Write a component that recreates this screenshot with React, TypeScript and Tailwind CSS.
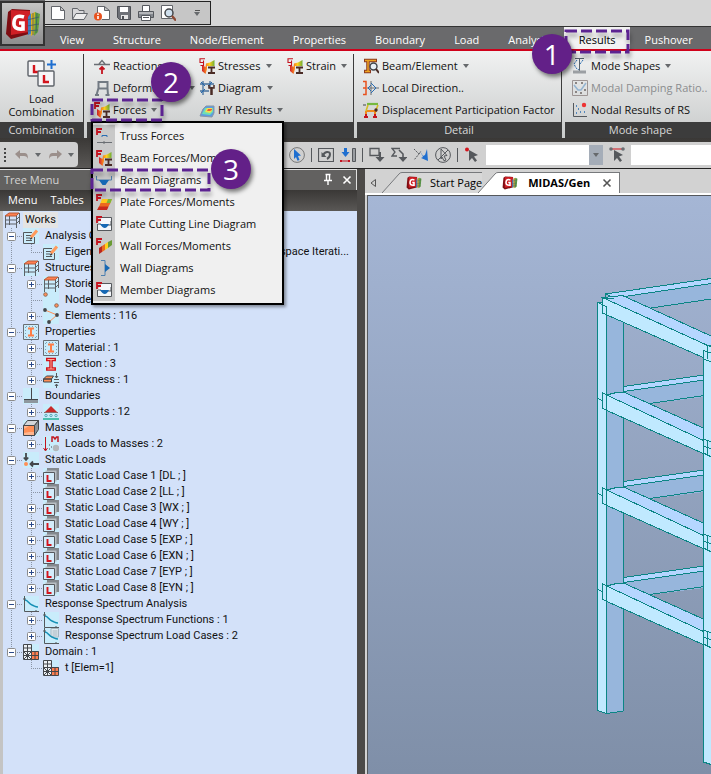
import React from 'react';

type IconProps = { name: string; className?: string };

const LoadBox = ({ x, y }: { x: number; y: number }) => (
  <g>
    <rect x={x} y={y} width="16" height="15" rx="1" fill="#f5f5f7" stroke="#5c6168" strokeWidth="1.4" />
    <path d={`M${x + 6} ${y + 4}v7h5`} fill="none" stroke="#d3141c" strokeWidth="2.4" />
  </g>
);

const Rainbow = () => (
  <g>
    <defs>
      <linearGradient id="rainbow" x1="0" x2="1" y1="0" y2="0">
        <stop offset="0" stopColor="#cf1f2b" />
        <stop offset="0.3" stopColor="#f47a20" />
        <stop offset="0.6" stopColor="#ffd01c" />
        <stop offset="1" stopColor="#6fae35" />
      </linearGradient>
    </defs>
    <path d="M3 7l3.500 2L7 5.500l4-1L15.500 2v6H8v3l-1.500 5L3 13z" fill="url(#rainbow)" />
  </g>
);

const RedF = () => <path d="M1 7V1h5M1 4h4" fill="none" stroke="#c4131f" strokeWidth="1.8" />;

const Beam = () => <path d="M9 9.500h7M9 15h7M12.500 9v6" stroke="#4a2b25" strokeWidth="1.800" fill="none" />;

const StressIcon = () => (
  <g>
    <Rainbow />
    <Beam />
    <path d="M6 .8H1v3.700h3.500V2.500M4.500 4.500v3H1.500" fill="none" stroke="#c4131f" strokeWidth="1.1" />
  </g>
);

const Story = () => (
  <g fill="none" stroke="#5d6166">
    <path d="M1 4l4-3h10l-3 3z" fill="#ff7f50" stroke="#b85a38" />
    <path d="M1.500 4v12M12.500 4v12M5.500 4v9M15.500 1v11M1 8h11l3-3M1 12h11l3-3" />
  </g>
);

const CutLine = () => (
  <g>
    <path d="M6 1.500h9.500v13h-14V8" fill="#f3f6fa" stroke="#55585c" />
    <path d="M2 8h3q3 5 6 1h4v-4" stroke="#55585c" fill="none" />
    <path d="M4 8h9q-4 8-9 0z" fill="#1668b4" />
    <RedF />
  </g>
);

const Curve = () => (
  <g fill="none">
    <path d="M1.500 0v15.500H16M0 3h3M13 14v2" stroke="#55585c" />
    <path d="M2 4c3 0 4 4 7 5s3 2 6 2" stroke="#1590b5" strokeWidth="1.5" />
  </g>
);

const PointerShape = ({ fill = '#55585c' }: { fill?: string }) => (
  <path d="M5 3l9 5-4 1.500 3 4-2 1.500-3-4-3 3z" fill={fill} />
);

const drawings: Record<string, React.ReactNode> = {
  newDoc: <path d="M1.500 1.500h9l4 4v9h-13zM10.500 1.500v4h4" fill="#fff" stroke="#63666b" />,
  open: (
    <g stroke="#63666b">
      <path d="M.5 14.500v-11h5l1.500 2h5v3" fill="#d8d8da" />
      <path d="M.5 14.500l3.500-6h11.500l-3.500 6z" fill="#eee" />
    </g>
  ),
  docInfo: (
    <g>
      <path d="M3.500 8V1.500h7l5 4v9H8M10.500 1.500v4h5" fill="#fff" stroke="#63666b" />
      <circle cx="4" cy="11.500" r="4" fill="#e8521e" />
      <path d="M4 8.500v1.500M4 11v3" stroke="#fff" strokeWidth="1.600" />
    </g>
  ),
  save: (
    <g>
      <path d="M1.500 1.500h13v13h-11l-2-2z" fill="#6e7177" stroke="#4d5055" />
      <path d="M4 2h8v5H4z" fill="#fff" />
      <path d="M5 10h7v4H5z" fill="#e6e6e6" />
      <path d="M6 11h2v3H6z" fill="#4d5055" />
    </g>
  ),
  print: (
    <g stroke="#55585d">
      <path d="M4.500 6V.5h7V6" fill="#fff" />
      <path d="M.5 6.500h15v6H.5z" fill="#85898f" />
      <path d="M1 8h14" stroke="#e4e4e4" />
      <path d="M3.500 10.500h9v5h-9z" fill="#fff" />
      <path d="M5 12.500h6" />
    </g>
  ),
  preview: (
    <g>
      <path d="M1.500.5h11v13h-11z" fill="#fff" stroke="#63666b" />
      <circle cx="9" cy="8" r="4" fill="#cfe0ee" stroke="#44474b" strokeWidth="1.500" />
      <path d="M12 11l4 4.500" stroke="#8c4a35" strokeWidth="2.400" />
    </g>
  ),
  reaction: (
    <g>
      <path d="M0 6.500h16M5 6l3-3.500L11 6" stroke="#6a6e73" strokeWidth="1.300" fill="none" />
      <path d="M8 16v-6M5.500 11.500L8 9l2.500 2.500" stroke="#c4131f" strokeWidth="1.800" fill="none" />
    </g>
  ),
  deform: (
    <path d="M4 2h9.500M4.500 1v7L2.500 15M13.500 1v7l.5 7M4 8.500h9.500M1 15h4M11.500 15h4" stroke="#727a83" strokeWidth="2" fill="none" />
  ),
  forces: <g><Rainbow /><Beam /><RedF /></g>,
  stresses: <StressIcon />,
  diagram: (
    <g fill="none">
      <path d="M1 4h14M1 11h9M4 1v14M11 1v6" stroke="#46709c" strokeWidth="1.300" />
      <path d="M2 2l4 4M9 6l4-4M2 13l4-4" stroke="#2167b0" />
      <path d="M12.500 7v8" stroke="#4a2b25" strokeWidth="2.500" />
      <path d="M10 5v3h5V5" stroke="#4a2b25" strokeWidth="1.500" />
    </g>
  ),
  hy: (
    <g>
      <path d="M1 14L4 7l3-3h8v7l-2 4z" fill="#5b9de3" stroke="#8995a3" />
      <path d="M3 12l3-6h8v4l-3 3z" fill="#6fe0b5" />
      <path d="M6 10l2-4h5v3l-2 2z" fill="#f2e04f" />
      <path d="M8 9l1-2h4v1l-2 1z" fill="#ec5b36" />
    </g>
  ),
  beamElement: (
    <g fill="none">
      <path d="M1 2.500h13M1 13.500h7M5 3v10" stroke="#8b3a20" strokeWidth="3.500" />
      <path d="M2 2.500h11M2 13.500h5M5 3v10" stroke="#eda321" strokeWidth="1.500" />
      <circle cx="10.500" cy="8.500" r="3.500" fill="#e6eef5" stroke="#40444a" strokeWidth="1.400" />
      <path d="M13 11l3 4" stroke="#4a2b25" strokeWidth="2" />
    </g>
  ),
  localDir: (
    <g fill="none">
      <path d="M0 1.500h3v13H0M0 8h3" stroke="#e8521e" strokeWidth="1.500" />
      <path d="M4 8h12M8 1v14" stroke="#6a6e73" />
      <path d="M8 3l5 5-5 5M5 8l3-3M5 8l3 3" stroke="#2a6db3" />
    </g>
  ),
  displacement: (
    <g fill="none">
      <path d="M4 2h11" stroke="#76b83f" strokeWidth="2.200" />
      <path d="M3 9h11M3 9v3M12 9v3" stroke="#ef8a1c" strokeWidth="2" />
      <path d="M3 12v3M12 12v3M1 15h4M10 15h4" stroke="#c4131f" strokeWidth="2" />
      <path d="M5 3L3 9M15 3l-2 5" stroke="#d7bc26" strokeWidth="1.600" />
      <path d="M0 3h3" stroke="#44474b" />
      <circle cx="13" cy="8" r="1.700" fill="#4a2b25" />
    </g>
  ),
  modeShapes: (
    <g fill="none">
      <path d="M3 .5h9M7.500 0v13" stroke="#55606a" />
      <path d="M5 2L2 6l2 4 3 2M11 2L8 6" stroke="#2a6db3" strokeDasharray="2 1" />
      <path d="M1 14h13" stroke="#9b9fa3" strokeWidth="3" />
    </g>
  ),
  damping: (
    <g fill="none">
      <path d="M.5.5h15v15H.5z" stroke="#9d9594" />
      <path d="M2 5l4 5h3l5-7" stroke="#94b4d1" strokeWidth="1.500" />
      <path d="M3 3h2M9 3h2M3 12h2M8 13h2M12 10h2" stroke="#8a8583" strokeWidth="2" />
    </g>
  ),
  nodal: (
    <g fill="none">
      <path d="M1.500 1v13.500H15" stroke="#55585c" />
      <circle cx="12" cy="3" r="2.200" fill="#e33" />
      <path d="M4 4h1M6 7h1M8 10h1M12 10h1M4 11h1" stroke="#2a6db3" strokeWidth="1.400" />
    </g>
  ),
  truss: (
    <g>
      <RedF />
      <path d="M6 9V7.500h5V9" stroke="#2a6db3" fill="none" />
      <path d="M1 14.500h15M8 13v3" stroke="#6a6e73" fill="none" />
    </g>
  ),
  beamDiagram: (
    <g>
      <path d="M.5 4v4h15V4" stroke="#4c7fae" fill="none" />
      <path d="M3 8h10l-3.500 5h-3z" fill="#1668b4" />
    </g>
  ),
  plate: (
    <g>
      <path d="M6 5h10l-1.500 4H4.500z" fill="#ffc71c" />
      <path d="M12 5h4l-1.500 4h-4z" fill="#7cb53a" />
      <path d="M4.500 9h10L11 15H2z" fill="#ec6a20" />
      <path d="M3 12.500h9.500L11 16H1z" fill="#c92a1e" />
      <RedF />
    </g>
  ),
  cutLine: <CutLine />,
  wall: (
    <g>
      <path d="M3 10l3-2v6l-3 2z" fill="#b9261f" />
      <path d="M6 8l3-2v6l-3 2z" fill="#ec6a20" />
      <path d="M9 6l3-2v6l-3 2z" fill="#ffd01c" />
      <path d="M12 4l4-2v5l-4 3z" fill="#6a9b35" />
      <RedF />
    </g>
  ),
  wallDiagram: (
    <g>
      <path d="M5 .5h4v15H5" stroke="#4c7fae" fill="none" />
      <path d="M9 4l5 4-5 4z" fill="#1668b4" />
    </g>
  ),
  story: <Story />,
  edit: (
    <g fill="none">
      <path d="M9 4.500H.5v11h11V9M3 7.500h5M3 10h4M3 12.500h6" stroke="#55585c" />
      <path d="M8 9.500l6-7" stroke="#ff9a5c" strokeWidth="3" />
      <path d="M7 11l2-1" stroke="#444" strokeWidth="1.500" />
    </g>
  ),
  nodes: (
    <g fill="#ff8f56" stroke="#8f6a5c">
      <circle cx="2.500" cy="2.500" r="1.800" />
      <circle cx="13.500" cy="13.500" r="1.800" />
    </g>
  ),
  elements: (
    <g>
      <path d="M2 2l12 5-8 7" stroke="#ff8f56" fill="none" />
      <g fill="#44474b"><circle cx="2" cy="2" r="1.900" /><circle cx="14" cy="7" r="1.900" /><circle cx="6" cy="14" r="1.900" /></g>
    </g>
  ),
  material: (
    <g fill="none">
      <path d="M.5.5h15v15H.5z" stroke="#6a6e73" />
      <path d="M3 2.500h11M3 13.500h11M2.500 3v11M13.500 3v11" stroke="#7ea1b5" strokeDasharray="1 2" />
      <path d="M5 4.500h6M5 11.500h6M8 5v6" stroke="#ff7e46" strokeWidth="2" />
    </g>
  ),
  section: (
    <g fill="none">
      <path d="M3 3.500h10M3 13h10M8 4v9" stroke="#d3141c" strokeWidth="3.500" />
      <path d="M4.500 3.500h7M4.500 13h7M8 4v9" stroke="#ffb09a" />
    </g>
  ),
  thickness: (
    <g>
      <path d="M.5 7l3-3h7l-2 3zM.5 7h8v3h-8z" fill="#ff8f56" stroke="#44474b" />
      <path d="M11 7.500h5M11 10.500h5M13.500 1v5M13.500 12v4M12 4l1.500 2L15 4M12 14l1.500-2 1.500 2" stroke="#55585c" fill="none" />
    </g>
  ),
  boundary: (
    <g>
      <path d="M8.500 0v11M1 11.500h14" stroke="#44474b" />
      <path d="M1 12h14v3H1z" fill="#8e979e" />
    </g>
  ),
  support: (
    <g>
      <path d="M2 8l6-6 6 6z" fill="#c92a2a" />
      <path d="M1 8.500h14" stroke="#8d6a6a" />
      <g fill="none" stroke="#5aa9b8"><circle cx="3" cy="11.500" r="1.200" /><circle cx="8" cy="11.500" r="1.200" /><circle cx="13" cy="11.500" r="1.200" /></g>
      <path d="M0 15h16" stroke="#4bbfae" strokeWidth="2" />
    </g>
  ),
  mass: (
    <g stroke="#44474b">
      <path d="M.5 5.500l4-5h11l-4 5z" fill="#d3d6da" />
      <path d="M.5 5.500h11v10H.5z" fill="#ffb68e" />
      <path d="M1 9l5-3h5v6H6l-5 1z" fill="#ff8f56" stroke="none" />
      <path d="M11.500 5.500l4-5v9l-4 6z" fill="#8f9398" />
    </g>
  ),
  loadMass: (
    <g fill="none">
      <path d="M2.500 1v13M.5 12l2 3 2-3" stroke="#c4131f" />
      <path d="M9 6V1h1.500l1.500 2 1.500-2H15v5" stroke="#c4131f" strokeWidth="1.500" />
      <circle cx="13" cy="12" r="3.200" fill="#b3b6ba" />
      <path d="M6 9h1M8 11h1M6 13h1" stroke="#44474b" />
    </g>
  ),
  staticLoad: (
    <g>
      <path d="M3 1v7M.8 5.500L3 8l2.200-2.500M16 12H8M10 9.500L7.500 12l2.500 2.500" stroke="#44474b" strokeWidth="1.800" fill="none" />
      <circle cx="3" cy="12" r="2" fill="#ff8f56" />
    </g>
  ),
  loadCase: (
    <g>
      <path d="M4 0h12v12H4z" fill="#84898e" />
      <path d="M2.500 2.500h11v11h-11z" fill="#b9bfc4" />
      <path d="M.5 4.500h11v11H.5z" fill="#d3ecfb" stroke="#55585c" />
      <path d="M4.500 7v6h4" stroke="#d3141c" strokeWidth="1.900" fill="none" />
    </g>
  ),
  curve: <Curve />,
  curveCases: (
    <g>
      <path d="M8 .5h7.500V9H8zM9.500 3h5M9.500 5h5M9.500 7h5" stroke="#a6b5bf" fill="#dfeaf1" />
      <Curve />
    </g>
  ),
  domain: (
    <g stroke="#44474b">
      <path d="M.5.5h8v15h-8z" fill="#eef2f5" />
      <path d="M8.500 7.500h7v8h-7z" fill="#ff7f50" />
      <path d="M4.500 1v14M.5 4h8M.5 7.500h15M.5 11.500h15M12 8v8M1 8l7 7M8 8l-7 7" fill="none" />
    </g>
  ),
  pickCircle: (
    <g>
      <circle cx="8" cy="8" r="7.400" fill="none" stroke="#777" />
      <path d="M5 2l7 6.500-3 .5 1.500 4-2 .8L7 10l-2 2z" fill="#1f6fd0" />
    </g>
  ),
  rotateBox: (
    <g fill="none" stroke="#55585c">
      <path d="M.5 1.500h15v13H.5z" strokeWidth="1.200" />
      <path d="M5 9c1-5 7-5 7-2 0 2-1 4-3 5" strokeWidth="2" />
      <path d="M3.500 5v5h5z" fill="#55585c" stroke="none" />
    </g>
  ),
  dropLine: (
    <g fill="none">
      <path d="M5.500 1v6" stroke="#1f6fd0" strokeWidth="3" />
      <path d="M1.500 5h8l-4 5z" fill="#1f6fd0" />
      <path d="M0 14h10" stroke="#c4131f" />
      <path d="M0 13h2v2H0zM8 13h2v2H8z" fill="#c4131f" />
      <path d="M12.500 1.500h3v13h-3z" fill="#9a9da1" stroke="#55585c" />
    </g>
  ),
  selWindow: (
    <g fill="none">
      <path d="M1 1.500h9v7H1z" stroke="#55585c" strokeWidth="1.300" />
      <path d="M11 5v6" stroke="#55585c" strokeWidth="2" />
      <path d="M6.500 10h9L11 15z" fill="#55585c" />
    </g>
  ),
  selPoly: (
    <g fill="none">
      <path d="M9 1.500H1L4 5 1 9h5" stroke="#55585c" strokeWidth="1.300" />
      <path d="M8 3l4 4v4" stroke="#55585c" strokeWidth="1.600" />
      <path d="M7.500 10h9L12 15z" fill="#55585c" />
    </g>
  ),
  selCross: (
    <g fill="none">
      <path d="M1 2l5 5-5 6M6 7l2-3" stroke="#55585c" strokeDasharray="2 1" />
      <path d="M7 4l3 5 2-1 2-6 1 12-7-3 2-1z" fill="#1f6fd0" />
    </g>
  ),
  noPick: (
    <g fill="none" stroke="#55585c">
      <circle cx="8" cy="8" r="7.400" />
      <path d="M3 13L13 3M6 2l6 6.500-3 .5 2 4-2 .8L7 10l-1 2z" />
    </g>
  ),
  pickNode: (
    <g>
      <circle cx="3" cy="2.500" r="2" fill="#d3141c" />
      <PointerShape />
    </g>
  ),
  pickElem: (
    <g>
      <path d="M2 2h12" stroke="#d3141c" />
      <circle cx="2" cy="2" r="1.800" fill="#6a6e73" />
      <circle cx="14" cy="2" r="1.800" fill="#6a6e73" />
      <PointerShape />
    </g>
  ),
  undo: <path d="M1 7l5-4v3h5q3 0 3 6-1-3-4-3H6v3z" fill="#9b8f8b" />,
  redo: <path d="M15 7l-5-4v3H5q-3 0-3 6 1-3 4-3h4v3z" fill="#9b8f8b" />,
  pin: <path d="M5.500 2.500h5M6.500 2v6M9.500 2v6M4 8.500h8M8 9v4" stroke="#fff" strokeWidth="1.400" fill="none" />,
  close: <path d="M4.500 4.500l7 7M11.500 4.500l-7 7" stroke="currentColor" strokeWidth="1.600" />,
};

const Icon = ({ name, className = 'size-4' }: IconProps) => (
  <svg viewBox="0 0 16 16" className={`shrink-0 ${className}`} aria-hidden="true">
    {drawings[name]}
  </svg>
);

const Logo = ({ className }: { className: string }) => (
  <svg viewBox="0 0 36 32" className={`shrink-0 ${className}`} aria-hidden="true">
    <path d="M3 4l4-3 18 1-1 24-18 5-5-5z" fill="#7d0d12" />
    <path d="M6 2l19 1-1 21-18 3z" fill="#cf1f25" />
    <path d="M19 9q-9-3-10 5t9 7v-6h-4" fill="none" stroke="#fff" strokeWidth="3.600" />
    <path d="M23 9l3-4 1 20-4 2z" fill="#3f7fc4" />
    <path d="M26 6l4-2v21l-4 3z" fill="#e2b31f" />
    <path d="M30 4l5 2-2 18-4 4z" fill="#62a23c" />
    <path d="M22 12l12-3M22 18l12-2M22 23l11-1M28 5v22M32 5l-1 20" stroke="#3c5a6b" strokeWidth="0.800" />
  </svg>
);

const Arrow = ({ className = 'text-[#66696c]' }: { className?: string }) => (
  <svg viewBox="0 0 6 4" className={`h-1 w-[6px] shrink-0 ${className}`} aria-hidden="true">
    <path d="M0 0h6L3 4z" fill="currentColor" />
  </svg>
);

const Badge = ({ n, className }: { n: number; className: string }) => (
  <span
    className={`absolute z-40 flex size-10 items-center justify-center rounded-full bg-[#632088] text-[28px] leading-none text-white shadow-[2px_3px_4px_rgba(0,0,0,0.5)] ${className}`}
  >
    {n}
  </span>
);

const Marker = ({ className }: { className: string }) => (
  <svg className={`pointer-events-none absolute z-30 overflow-visible drop-shadow-[1px_4px_2px_rgba(0,0,0,0.35)] ${className}`}>
    <rect width="100%" height="100%" fill="none" stroke="#5c2391" strokeWidth="3" strokeDasharray="11 4" />
  </svg>
);

const Command = ({ icon, label, arrow, disabled }: { icon: string; label: string; arrow?: boolean; disabled?: boolean }) => (
  <button
    disabled={disabled}
    className="flex h-[22px] items-center gap-[3px] whitespace-nowrap text-[#111] disabled:text-[#8b8d8f]"
  >
    <Icon name={icon} />
    <span>{label}</span>
    {arrow && <span className="pl-[2px]"><Arrow /></span>}
  </button>
);

const Panel = ({ title, className = '', children }: { title: string; className?: string; children: React.ReactNode }) => (
  <section className={`flex shrink-0 flex-col border-r border-[#3c3c3c] ${className}`}>
    <div className="min-h-[68px] flex-1 pt-px">{children}</div>
    <h2 className="h-4 bg-[#3c3c3c] text-center leading-4 text-[#d8d8d8]">{title}</h2>
  </section>
);

const forceItems = [
  { icon: 'truss', label: 'Truss Forces' },
  { icon: 'forces', label: 'Beam Forces/Moments' },
  { icon: 'beamDiagram', label: 'Beam Diagrams' },
  { icon: 'plate', label: 'Plate Forces/Moments' },
  { icon: 'cutLine', label: 'Plate Cutting Line Diagram' },
  { icon: 'wall', label: 'Wall Forces/Moments' },
  { icon: 'wallDiagram', label: 'Wall Diagrams' },
  { icon: 'cutLine', label: 'Member Diagrams' },
];

const ForcesMenu = () => (
  <ul className="absolute top-[22px] -left-[3px] z-20 w-[193px] border-2 border-black bg-[#f0f0f0] py-[2px] shadow-[2px_2px_3px_rgba(0,0,0,0.4)]">
    {forceItems.map((item) => (
      <li key={item.label} className="relative">
        <button className="flex h-[22px] w-full items-center whitespace-nowrap text-[#111]">
          <span className="flex h-[22px] w-[22px] items-center justify-center bg-[#c9c9c9]">
            <Icon name={item.icon} />
          </span>
          <span className="pl-[5px]">{item.label}</span>
        </button>
        {item.label === 'Beam Diagrams' && (
          <>
            <Marker className="top-px -left-px h-[20px] w-[117px]" />
            <Badge n={3} className="-top-[20px] left-[118px]" />
          </>
        )}
      </li>
    ))}
  </ul>
);

const tabs = ['View', 'Structure', 'Node/Element', 'Properties', 'Boundary', 'Load', 'Analysis', 'Results', 'Pushover'];

const Header = () => (
  <header className="flex bg-[#d6d6d6]">
    <div className="w-[45px] shrink-0 bg-[#6a6a6c] pb-[3px]">
      <button aria-label="Application menu" className="mt-px flex h-[45px] w-full items-center justify-center border-2 border-[#333] bg-linear-to-b from-[#c4c4c4] to-[#8e8e8e]">
        <Logo className="h-8 w-9" />
      </button>
    </div>
    <div className="min-w-0 flex-1">
      <div className="flex h-[26px] items-start pt-px">
        <div className="flex h-6 items-center gap-[6px] border border-l-0 border-[#222] bg-[#c6c6c6] pr-[10px] pl-[5px]">
          {['newDoc', 'open', 'docInfo', 'save', 'print', 'preview'].map((name) => (
            <button key={name} aria-label={name}><Icon name={name} /></button>
          ))}
          <button aria-label="Customize" className="ml-3 flex flex-col items-center gap-px">
            <span className="h-px w-[5px] bg-[#555]" />
            <Arrow />
          </button>
        </div>
      </div>
      <nav className="flex h-[23px] border-t border-[#333] bg-[#6a6a6c] text-white">
        {tabs.map((tab) => (
          <div key={tab} className="relative shrink-0">
            <button
              className={`h-full pt-[3px] pr-[14px] pl-[15px] leading-4 ${tab === 'Results' ? 'bg-[#f2f2f2] text-black' : ''}`}
            >
              {tab}
            </button>
            {tab === 'Results' && (
              <>
                <Marker className="top-1 left-[2px] h-[21px] w-[62px]" />
                <Badge n={1} className="top-[7px] -left-[32px]" />
              </>
            )}
          </div>
        ))}
      </nav>
    </div>
  </header>
);

const Ribbon = () => (
  <div className="flex gap-[3px] border-t-2 border-[#d0021b] bg-linear-to-b from-[#f1f2f2] to-[#c9cbcb] pt-[3px]">
    <Panel title="Combination" className="w-[84px]">
      <button className="flex w-full flex-col items-center pt-[5px] leading-[13px] text-[#111]">
        <svg viewBox="0 0 30 28" className="mb-1 h-7 w-[30px]" aria-hidden="true">
          <LoadBox x={1} y={1} />
          <LoadBox x={11} y={11} />
          <path d="M24.500 0v9M20 4.500h9" stroke="#1f6fd0" strokeWidth="2" />
        </svg>
        Load<br />Combination
      </button>
    </Panel>
    <Panel title="" className="w-[267px]">
      <div className="flex pl-[7px]">
        <div className="w-[105px]">
          <Command icon="reaction" label="Reactions" arrow />
          <div className="relative">
            <Command icon="deform" label="Deformations" arrow />
            <Badge n={2} className="-top-[15px] left-[57px]" />
          </div>
          <div className="relative">
            <Command icon="forces" label="Forces" arrow />
            <Marker className="top-px -left-[2px] h-[20px] w-[70px]" />
            <ForcesMenu />
          </div>
        </div>
        <div className="w-[88px]">
          <Command icon="stresses" label="Stresses" arrow />
          <Command icon="diagram" label="Diagram" arrow />
          <Command icon="hy" label="HY Results" arrow />
        </div>
        <div>
          <Command icon="stresses" label="Strain" arrow />
        </div>
      </div>
    </Panel>
    <Panel title="Detail" className="w-[205px]">
      <div className="pl-[6px]">
        <Command icon="beamElement" label="Beam/Element" arrow />
        <Command icon="localDir" label="Local Direction.." />
        <Command icon="displacement" label="Displacement Participation Factor" />
      </div>
    </Panel>
    <Panel title="Mode shape" className="min-w-[152px] grow">
      <div className="pl-[7px]">
        <Command icon="modeShapes" label="Mode Shapes" arrow />
        <Command icon="damping" label="Modal Damping Ratio.." disabled />
        <Command icon="nodal" label="Nodal Results of RS" />
      </div>
    </Panel>
  </div>
);

const Divider = () => <span className="h-[14px] w-px shrink-0 bg-[#55585c]" />;

const Toolbar = () => (
  <div className="flex h-[31px] border-b border-[#222] bg-linear-to-b from-[#3a3836] to-[#5a5856] pt-1">
    <div className="flex h-[25px] w-[78px] shrink-0 items-center rounded-r bg-[#d0d0d0] pl-1">
      <span className="h-[14px] border-l-2 border-dotted border-[#444]" />
      <button aria-label="Undo" className="ml-2"><Icon name="undo" /></button>
      <span className="ml-[5px]"><Arrow /></span>
      <button aria-label="Redo" className="ml-[6px]"><Icon name="redo" /></button>
      <span className="ml-[5px]"><Arrow /></span>
    </div>
    <div className="w-[206px] shrink-0" />
    <div className="flex min-w-0 flex-1 items-center gap-[6px] bg-[#d0d0d0] pl-[5px]">
      <Icon name="pickCircle" />
      <Divider />
      <Icon name="rotateBox" />
      <Icon name="dropLine" />
      <Divider />
      <Icon name="selWindow" />
      <Icon name="selPoly" />
      <Icon name="selCross" />
      <Icon name="noPick" />
      <Divider />
      <Icon name="pickNode" />
      <div className="relative shrink-0">
        <select aria-label="Node selection" className="block h-5 w-[117px] appearance-none bg-white" />
        <span className="pointer-events-none absolute inset-y-0 right-0 flex w-[14px] items-center justify-center bg-[#a5adb8]">
          <Arrow />
        </span>
      </div>
      <Icon name="pickElem" />
      <input aria-label="Element selection" className="h-5 w-0 min-w-0 flex-1 bg-white" />
    </div>
  </div>
);

type TreeRow = { level: number; icon: string; label: string; toggle?: '+' | '-'; last?: boolean; detail?: string };

const treeRows: TreeRow[] = [
  { level: 1, icon: 'edit', label: 'Analysis Control Data', toggle: '-' },
  { level: 2, icon: 'edit', label: 'Eigenvalue Analysis', detail: 'space Iterati...', last: true },
  { level: 1, icon: 'story', label: 'Structures', toggle: '-' },
  { level: 2, icon: 'story', label: 'Stories : 5', toggle: '+' },
  { level: 2, icon: 'nodes', label: 'Nodes : 60' },
  { level: 2, icon: 'elements', label: 'Elements : 116', toggle: '+', last: true },
  { level: 1, icon: 'material', label: 'Properties', toggle: '-' },
  { level: 2, icon: 'material', label: 'Material : 1', toggle: '+' },
  { level: 2, icon: 'section', label: 'Section : 3', toggle: '+' },
  { level: 2, icon: 'thickness', label: 'Thickness : 1', toggle: '+', last: true },
  { level: 1, icon: 'boundary', label: 'Boundaries', toggle: '-' },
  { level: 2, icon: 'support', label: 'Supports : 12', toggle: '+', last: true },
  { level: 1, icon: 'mass', label: 'Masses', toggle: '-' },
  { level: 2, icon: 'loadMass', label: 'Loads to Masses : 2', toggle: '+', last: true },
  { level: 1, icon: 'staticLoad', label: 'Static Loads', toggle: '-' },
  { level: 2, icon: 'loadCase', label: 'Static Load Case 1 [DL ; ]', toggle: '+' },
  { level: 2, icon: 'loadCase', label: 'Static Load Case 2 [LL ; ]' },
  { level: 2, icon: 'loadCase', label: 'Static Load Case 3 [WX ; ]', toggle: '+' },
  { level: 2, icon: 'loadCase', label: 'Static Load Case 4 [WY ; ]', toggle: '+' },
  { level: 2, icon: 'loadCase', label: 'Static Load Case 5 [EXP ; ]', toggle: '+' },
  { level: 2, icon: 'loadCase', label: 'Static Load Case 6 [EXN ; ]', toggle: '+' },
  { level: 2, icon: 'loadCase', label: 'Static Load Case 7 [EYP ; ]', toggle: '+' },
  { level: 2, icon: 'loadCase', label: 'Static Load Case 8 [EYN ; ]', toggle: '+', last: true },
  { level: 1, icon: 'curve', label: 'Response Spectrum Analysis', toggle: '-' },
  { level: 2, icon: 'curve', label: 'Response Spectrum Functions : 1', toggle: '+' },
  { level: 2, icon: 'curveCases', label: 'Response Spectrum Load Cases : 2', toggle: '+', last: true },
  { level: 1, icon: 'domain', label: 'Domain : 1', toggle: '-', last: true },
  { level: 2, icon: 'domain', label: 't [Elem=1]', last: true },
];

// dotted connector with the optional expand box on top
const Branch = ({ toggle, last, through }: { toggle?: string; last?: boolean; through?: boolean }) => (
  <svg viewBox="0 0 20 16" className="h-4 w-5 shrink-0" aria-hidden="true">
    <path d={last ? 'M8.500 0v8' : 'M8.500 0v16'} stroke="#8b95a5" strokeDasharray="1 1" />
    {!through && <path d="M8 8.500h12" stroke="#8b95a5" strokeDasharray="1 1" />}
    {toggle && (
      <g>
        <rect x="4.500" y="4.500" width="8" height="8" rx="1" fill="#fff" stroke="#8c8c8c" />
        <path d={toggle === '+' ? 'M6 8.500h5M8.500 6v5' : 'M6 8.500h5'} stroke="#2b4a8b" />
      </g>
    )}
  </svg>
);

const TreeMenu = () => (
  <aside className="flex w-[357px] shrink-0 flex-col">
    <div className="flex h-[21px] items-center border-t border-r border-[#e0e0e0] bg-[#626160] pr-px pl-1 text-[#d4d4d4]">
      <span className="flex-1">Tree Menu</span>
      <button aria-label="Pin" className="mr-[3px]"><Icon name="pin" /></button>
      <button aria-label="Close" className="text-white"><Icon name="close" /></button>
    </div>
    <div className="flex h-[21px] items-center gap-[13px] bg-linear-to-b from-[#3a3836] to-[#5a5856] pl-2 text-white">
      <button>Menu</button>
      <button>Tables</button>
    </div>
    <ul className="flex-1 border-l-[3px] border-[#c4c4c4] bg-[#d3e1f9] pt-px font-[Roboto,'Liberation_Sans',sans-serif] text-[11px] leading-4 text-[#111]">
      <li className="flex h-4 items-center gap-[3px] pl-px">
        <Icon name="story" />
        <span className="bg-[#e4e4e4] px-[2px]">Works</span>
      </li>
      {treeRows.map((row, i) => (
        <li key={i} className="flex h-4 items-center whitespace-nowrap">
          {row.level === 1 && <Branch toggle={row.toggle} last={row.last} />}
          {row.level === 2 && (
            <>
              {i < treeRows.length - 1 ? <Branch through /> : <span className="w-5" />}
              <Branch toggle={row.toggle} last={row.last} />
            </>
          )}
          <span className="mr-[6px] flex bg-[#c9ecfb]"><Icon name={row.icon} /></span>
          <span>{row.label}</span>
          {row.detail && <span className="ml-auto pr-2">{row.detail}</span>}
        </li>
      ))}
    </ul>
  </aside>
);

const Slant = ({ fill }: { fill: string }) => (
  <svg viewBox="0 0 20 21" className="h-[21px] w-5 shrink-0" aria-hidden="true">
    <path d="M0 21L17 2q1-1.500 3-1.500V21z" fill={fill} />
    <path d="M0 21L17 2q1-1.500 3-1.500" fill="none" stroke="#77797c" />
  </svg>
);

const DocTabs = () => (
  <div className="flex h-[26px] items-end border-b-2 border-white bg-[#d2d2d2]">
    <button aria-label="Scroll tabs left" className="mr-[6px] flex h-[21px] items-center pl-[5px] text-[#555]">
      <svg viewBox="0 0 6 8" className="h-2 w-[6px]" aria-hidden="true">
        <path d="M5.500.5v7L1 4z" fill="none" stroke="currentColor" />
      </svg>
    </button>
    <Slant fill="#d8d8d8" />
    <button className="flex h-[21px] items-center gap-2 border-t border-[#77797c] bg-[#d8d8d8] pl-1 text-black">
      <Logo className="h-[14px] w-4" />
      Start Page
    </button>
    <div className="-ml-1 flex">
      <Slant fill="#fff" />
      <div className="flex h-[21px] items-center border-t border-r border-[#77797c] bg-white pr-1 pl-1 text-black">
        <button className="flex items-center gap-[10px] font-bold">
          <Logo className="h-[14px] w-4" />
          MIDAS/Gen
        </button>
        <button aria-label="Close tab" className="ml-[9px] text-[#555]"><Icon name="close" /></button>
      </div>
    </div>
  </div>
);

const Floor = ({ dy }: { dy: number }) => (
  <g transform={`translate(0 ${dy})`}>
    <path d="M623 391.500L711 379v17l-61 8z" fill="#97b6dc" stroke="none" />
    <path d="M623.500 386.500L711 374v5l-87.500 12.500z" fill="#b5d6ff" />
    <path d="M650 403.500l61-9" />
    <path d="M606.500 395l8-2 9-1L711 431.500V444z" fill="#b5d6ff" />
    <path d="M602.500 393L711 444v13L602.500 408.500z" fill="#c0e9ff" />
    <path d="M597.500 398.500l5 2M606.500 395v15" />
  </g>
);

const FrameModel = () => (
  <svg viewBox="368 196 343 578" className="block w-full" role="img" aria-label="Structural frame model">
    <g stroke="#0b8585" fill="none" shapeRendering="crispEdges">
      <path d="M606.500 300h17v411l-17 2.500z" fill="#97b6dc" />
      <path d="M597.500 302.500h9v411l-9-3z" fill="#c0e9ff" />
      <path d="M615 298l96-15v16l-60 9z" fill="#97b6dc" stroke="none" />
      <path d="M605.500 294L711 278.500v5L615 298z" fill="#b5d6ff" />
      <path d="M651 308l60-9" />
      <path d="M602.500 297.500l12-1 8-1L711 336v11z" fill="#b5d6ff" />
      <path d="M602.500 297.500L711 347v14L602.500 313z" fill="#c0e9ff" />
      <path d="M605.500 294v4h8M606.500 306v9M597.500 302.500l9 4" />
      <Floor dy={0} />
      <Floor dy={95} />
      <Floor dy={191} />
      <path d="M703.500 350.500l9 3V765l-9-3z" fill="#c0e9ff" />
      <path d="M707.500 345v14M703.500 359l8 3M707.500 345h4" />
      {[0, 95, 191].map((dy) => (
        <path key={dy} transform={`translate(0 ${dy})`} d="M703.500 439l8 3M703.500 453l8 4M707.500 441v14M703.500 446l8 3" />
      ))}
    </g>
  </svg>
);

export default function App() {
  return (
    <div className="flex min-h-screen flex-col overflow-hidden bg-[#4a4846] font-['Open_Sans','Noto_Sans',sans-serif] text-[11px]">
      <Header />
      <Ribbon />
      <Toolbar />
      <div className="flex flex-1">
        <TreeMenu />
        <div className="w-2 shrink-0 bg-[#4c4a48]" />
        <main className="flex min-w-0 flex-1 flex-col bg-[#d2d2d2]">
          <DocTabs />
          <div className="ml-[2px] flex-1 border-t border-l border-[#55585c] bg-linear-to-b from-[#a5b6d5] to-[#7f8fa8]">
            <FrameModel />
          </div>
        </main>
      </div>
    </div>
  );
}
